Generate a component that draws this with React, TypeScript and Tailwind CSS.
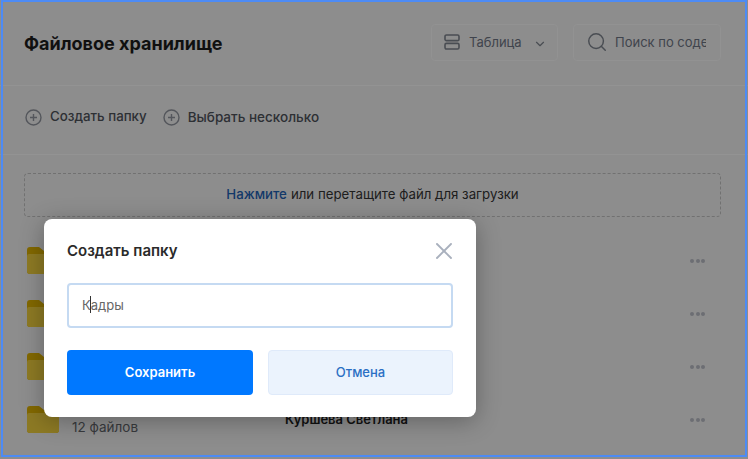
import { ChevronDown, Search, X } from "lucide-react";

const ROWS = [
  { id: 1 },
  { id: 2 },
  { id: 3 },
  { id: 4, files: "12 файлов", owner: "Куршева Светлана" },
  { id: 5, name: "Документы" },
];

function Folder() {
  return (
    <svg width="32" height="27" viewBox="0 0 32 27" className="shrink-0">
      <path d="M0 3a3 3 0 0 1 3-3h9l5 4h12a3 3 0 0 1 3 3v17a3 3 0 0 1-3 3H3a3 3 0 0 1-3-3z" fill="#d9ae00" />
      <path d="M0 9a2 2 0 0 1 2-2h28a2 2 0 0 1 2 2v15a3 3 0 0 1-3 3H3a3 3 0 0 1-3-3z" fill="#eccb3c" />
    </svg>
  );
}

function PlusCircle() {
  return (
    <svg width="17" height="17" viewBox="0 0 17 17" fill="none" stroke="#8c9099" className="shrink-0">
      <circle cx="8.5" cy="8.5" r="7.5" strokeWidth="1.4" />
      <path d="M8.5 5v7M5 8.5h7" strokeWidth="1.4" />
    </svg>
  );
}

export default function App() {
  return (
    <div className="relative h-[459px] w-[748px] overflow-hidden bg-[#ebebeb] font-['Inter','Noto_Sans',sans-serif] text-[#1c1c1c]">
      {/* Header */}
      <header className="flex h-[86px] items-center justify-between border-b border-[#f5f5f5] pb-[1px] pl-[24px] pr-[27px]">
        <h1 className="mt-[2px] text-[18px] font-bold">Файловое хранилище</h1>
        <div className="flex gap-[15px]">
          <div className="flex h-[37px] w-[127px] items-center rounded-[4px] border border-[#f3f3f3] pl-[12px] text-[#6b7280]">
            <svg width="16" height="16" viewBox="0 0 16 16" fill="none" stroke="#7b808a" strokeWidth="1.6">
              <rect x="1" y="1" width="14" height="5.6" rx="1.4" />
              <rect x="1" y="9.4" width="14" height="5.6" rx="1.4" />
            </svg>
            <span className="ml-[9px] mt-[1px] text-[13px]">Таблица</span>
            <ChevronDown size={14} className="ml-[11px] mt-[3px] text-[#7b808a]" />
          </div>
          <div className="flex h-[37px] w-[148px] items-center overflow-hidden rounded-[4px] border border-[#f3f3f3] pl-[12px]">
            <Search size={22} strokeWidth={1.6} className="shrink-0 text-[#7b808a]" />
            <div className="ml-[7px] mt-[1px] w-[91px] overflow-hidden whitespace-nowrap text-[13px] text-[#6b7280]">Поиск по содержимому</div>
          </div>
        </div>
      </header>

      {/* Toolbar */}
      <div className="flex h-[69px] items-center gap-[16px] border-b border-[#f5f5f5] pb-[6px] pl-[25px] text-[13.3px] font-medium text-[#4b5058]">
        <div className="flex items-center gap-[8px]">
          <PlusCircle />
          <span>Создать папку</span>
        </div>
        <div className="flex items-center gap-[8px]">
          <PlusCircle />
          <span className="text-[13.5px]">Выбрать несколько</span>
        </div>
      </div>

      {/* Upload */}
      <div className="mx-[24px] mr-[27px] mt-[18px] flex h-[44px] items-center justify-center rounded-[4px] border border-dashed border-[#bdbdbd] text-[13.25px]">
        <span className="font-medium text-[#1f5fb0]">Нажмите</span>
        <span className="ml-[4px] text-[#333]">или перетащите файл для загрузки</span>
      </div>

      {/* Folder list */}
      <div className="mt-[17px] pl-[27px] pr-[43px]">
        {ROWS.map((row) => (
          <div key={row.id} className="flex h-[53px] items-center">
            <Folder />
            <div className="ml-[13px] flex w-[213px] flex-col self-stretch pt-[24px] text-[13.5px]">
              {row.files && <span className="text-[#5f6368]">{row.files}</span>}
              {row.name && <span className="-mt-[12px] font-semibold">{row.name}</span>}
            </div>
            <span className="mt-[1px] text-[13px] font-semibold">{row.owner}</span>
            <div className="ml-auto flex gap-[1.5px]">
              <i className="size-[4px] rounded-full bg-[#b4b8c0]" />
              <i className="size-[4px] rounded-full bg-[#b4b8c0]" />
              <i className="size-[4px] rounded-full bg-[#b4b8c0]" />
            </div>
          </div>
        ))}
      </div>

      {/* Dim layer */}
      <div className="absolute inset-0 bg-black/40" />

      {/* Modal */}
      <div className="absolute left-[44px] top-[219px] h-[198px] w-[432px] rounded-[8px] bg-white px-[23px] pt-[22px] shadow-[0_4px_24px_rgba(0,0,0,0.3)]">
        <div className="flex h-[20px] items-center justify-between">
          <h2 className="text-[15px] font-semibold text-[#2a2a2a]">Создать папку</h2>
          <X size={28} strokeWidth={1.6} className="-mr-[5px] text-[#a9b0bd]" />
        </div>
        <div className="relative mt-[22px] flex h-[45px] items-center rounded-[4px] border-2 border-[#c5daf2] pl-[13px] text-[13px] text-[#666666]">
          Кадры
          <span className="absolute left-[21px] top-[11px] h-[17px] w-px bg-[#333]" />
        </div>
        <div className="mt-[22px] flex gap-[15px]">
          <button className="h-[45px] w-[186px] rounded-[4px] bg-[#0078ff] text-[13px] font-semibold text-white">Сохранить</button>
          <button className="h-[45px] w-[185px] rounded-[4px] border border-[#dfeafa] bg-[#ebf3fd] text-[13px] font-medium text-[#2a6fc4]">Отмена</button>
        </div>
      </div>

      {/* Focus frame */}
      <div className="absolute bottom-[2px] left-[1px] right-[1px] top-0 border-2 border-[#4d8bf5]" />
    </div>
  );
}
